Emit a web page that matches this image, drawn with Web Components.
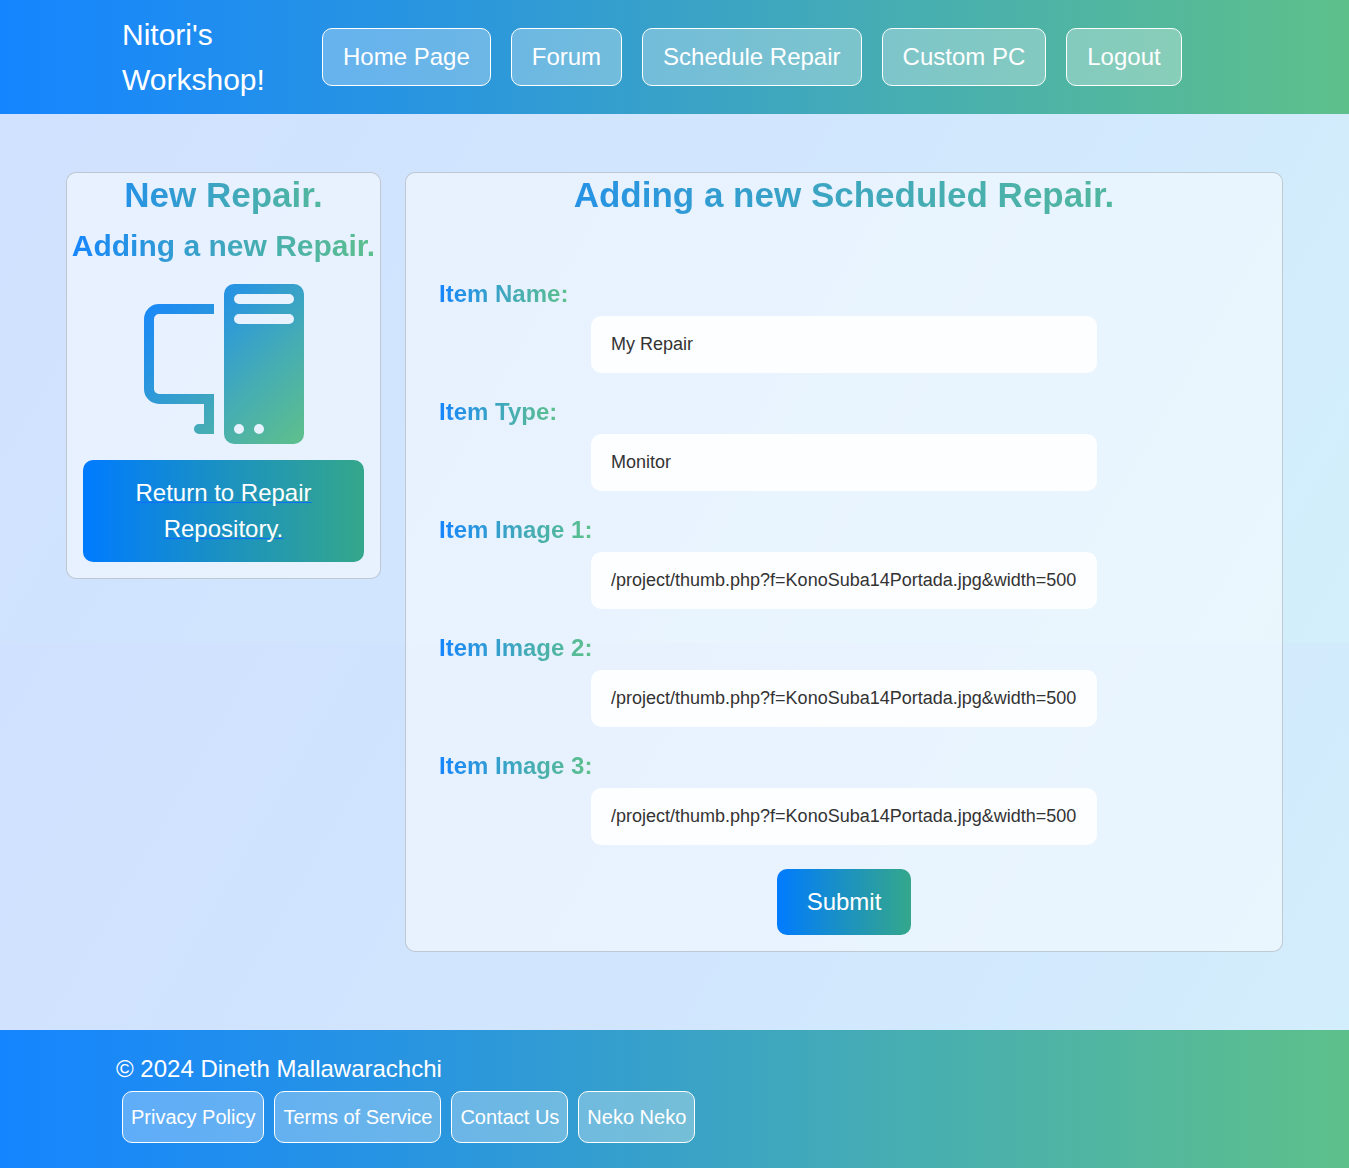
<!DOCTYPE html>
<html lang="en">
<head>
<meta charset="utf-8">
<meta name="viewport" content="width=device-width, initial-scale=1">
<title>Nitori's Workshop - New Repair</title>
<style>
  :root {
    --bar: linear-gradient(90deg, #1585ff, #2a96de 33%, #46adb3 66%, #5dc08b);
    --ink: linear-gradient(90deg, #1585ff, #2a96de 25%, #46adb3 60%, #5dc08b);
    --action: linear-gradient(90deg, #007bff, #168dcd 40%, #34a78b);
    --radius: 10px;
  }
  body {
    margin: 0;
    min-height: 100vh;
    font: 24px/36px "Liberation Sans", Arial, sans-serif;
    color: #333;
    background: linear-gradient(120deg, #d0e1ff, #d1e6fe 50%, #d3effb) 0 0 / 100% 643px repeat;
  }
</style>
</head>
<body>
<workshop-page></workshop-page>

<script>
class BaseElement extends HTMLElement {
  connectedCallback() {
    if (this.shadowRoot) return;
    this.attachShadow({ mode: "open" }).innerHTML =
      `<style>*{box-sizing:border-box}:host{display:block}</style>${this.render()}`;
  }
}

class PillLink extends BaseElement {
  render() {
    return `<style>
      :host { flex: none; }
      a { display: block; padding: 10px 20px; border: 1px solid #fff; border-radius: var(--radius);
          background: rgba(255,255,255,.3); color: #fff; text-decoration: none; white-space: nowrap; }
      :host([small]) a { padding: 10px 8px; font-size: 20px; line-height: 30px; }
    </style><a href="#"><slot></slot></a>`;
  }
}

class SiteHeader extends BaseElement {
  render() {
    return `<style>
      header { padding: 12px 24px; background: var(--bar); }
      .inner { display: flex; align-items: center; max-width: 1105px; margin: 0 auto; }
      .brand { flex: none; width: 160px; margin-right: 40px; font-size: 30px; line-height: 45px; color: #fff; text-decoration: none; }
      nav { display: flex; flex-wrap: wrap; gap: 20px; }
    </style>
    <header><div class="inner">
      <a class="brand" href="#">Nitori's Workshop!</a>
      <nav>
        <pill-link>Home Page</pill-link><pill-link>Forum</pill-link><pill-link>Schedule Repair</pill-link><pill-link>Custom PC</pill-link><pill-link>Logout</pill-link>
      </nav>
    </div></header>`;
  }
}

class SiteFooter extends BaseElement {
  render() {
    return `<style>
      footer { padding: 21px 24px 25px; background: var(--bar); color: #fff; }
      .inner { max-width: 1117px; margin: 0 auto; }
      p { margin: 0 0 4px; }
      nav { display: flex; flex-wrap: wrap; gap: 10px; padding: 0 6px; }
    </style>
    <footer><div class="inner">
      <p>© 2024 Dineth Mallawarachchi</p>
      <nav>
        <pill-link small>Privacy Policy</pill-link><pill-link small>Terms of Service</pill-link><pill-link small>Contact Us</pill-link><pill-link small>Neko Neko</pill-link>
      </nav>
    </div></footer>`;
  }
}

class GlassCard extends BaseElement {
  render() {
    return `<style>
      :host { border: 1px solid rgba(0,0,0,.175); border-radius: var(--radius);
              background: rgba(255,255,255,.5); box-sizing: border-box; }
      h1 { margin: 0; font-size: 35px; line-height: 43px; text-align: center;
           background: var(--ink); background-clip: text; -webkit-background-clip: text; color: transparent; }
    </style>
    <h1>${this.getAttribute("heading")}</h1><slot></slot>`;
  }
}

class PcIcon extends BaseElement {
  render() {
    return `<style>svg { display: block; width: 160px; height: 160px; margin: 0 auto; }</style>
    <svg viewBox="0 0 16 16" aria-hidden="true">
      <defs><linearGradient id="g" x1="0" y1="0" x2="1" y2="1">
        <stop offset="0" stop-color="#1585ff"/><stop offset=".33" stop-color="#2a96de"/><stop offset=".66" stop-color="#46adb3"/><stop offset="1" stop-color="#5fc08b"/>
      </linearGradient></defs>
      <path fill="url(#g)" d="M8 1a1 1 0 0 1 1-1h6a1 1 0 0 1 1 1v14a1 1 0 0 1-1 1H9a1 1 0 0 1-1-1zm1 13.5a.5.5 0 1 0 1 0 .5.5 0 0 0-1 0m2 0a.5.5 0 1 0 1 0 .5.5 0 0 0-1 0M9.5 1a.5.5 0 0 0 0 1h5a.5.5 0 0 0 0-1zM9 3.5a.5.5 0 0 0 .5.5h5a.5.5 0 0 0 0-1h-5a.5.5 0 0 0-.5.5M1.5 2A1.5 1.5 0 0 0 0 3.5v7A1.5 1.5 0 0 0 1.5 12H6v2h-.5a.5.5 0 0 0 0 1H7v-4H1.5a.5.5 0 0 1-.5-.5v-7a.5.5 0 0 1 .5-.5H7V2z"/>
    </svg>`;
  }
}

class RepairSummary extends BaseElement {
  render() {
    return `<style>
      h2 { margin: 12px 0 20px; font-size: 30px; line-height: 36px; text-align: center;
           background: var(--ink); background-clip: text; -webkit-background-clip: text; color: transparent; }
      a { display: block; margin: 16px; padding: 15px 30px; border-radius: var(--radius);
          background: var(--action); text-align: center; color: #0d6efd; text-decoration-thickness: 1px; }
      span { color: #fff; }
    </style>
    <glass-card heading="New Repair.">
      <h2>Adding a new Repair.</h2>
      <pc-icon></pc-icon>
      <a href="#"><span>Return to Repair Repository.</span></a>
    </glass-card>`;
  }
}

class FormField extends BaseElement {
  render() {
    return `<style>
      :host { display: flex; flex-direction: column; gap: 4px; }
      label { align-self: flex-start; font-weight: bold;
              background: var(--ink); background-clip: text; -webkit-background-clip: text; color: transparent; }
      input { align-self: center; width: 506px; max-width: 100%; height: 57px; margin: 0; padding: 15px 20px;
              border: 0; border-radius: var(--radius); background: rgba(255,255,255,.9);
              font: 18px/27px "Liberation Sans", Arial, sans-serif; color: #333; }
    </style>
    <label for="field">${this.getAttribute("label")}</label>
    <input id="field" type="text">`;
  }
  connectedCallback() {
    super.connectedCallback();
    this.shadowRoot.querySelector("input").value = this.getAttribute("value");
  }
}

class RepairForm extends BaseElement {
  render() {
    const image = "/project/thumb.php?f=KonoSuba14Portada.jpg&amp;width=500";
    return `<style>
      form { display: flex; flex-direction: column; gap: 21px; padding: 60px 33px 16px; }
      button { align-self: center; margin: 3px 0 0; padding: 15px 30px; border: 0; border-radius: var(--radius);
               background: var(--action); color: #fff; font: inherit; }
    </style>
    <glass-card heading="Adding a new Scheduled Repair.">
      <form onsubmit="return false">
        <form-field label="Item Name:" value="My Repair"></form-field>
        <form-field label="Item Type:" value="Monitor"></form-field>
        <form-field label="Item Image 1:" value="${image}"></form-field>
        <form-field label="Item Image 2:" value="${image}"></form-field>
        <form-field label="Item Image 3:" value="${image}"></form-field>
        <button type="submit">Submit</button>
      </form>
    </glass-card>`;
  }
}

class WorkshopPage extends BaseElement {
  render() {
    return `<style>
      main { display: flex; align-items: flex-start; gap: 24px; max-width: 1265px; margin: 0 auto; padding: 58px 24px 78px; }
      repair-summary { flex: 0 0 315px; }
      repair-form { flex: 1; min-width: 0; }
    </style>
    <site-header></site-header>
    <main><repair-summary></repair-summary><repair-form></repair-form></main>
    <site-footer></site-footer>`;
  }
}

customElements.define("pill-link", PillLink);
customElements.define("site-header", SiteHeader);
customElements.define("site-footer", SiteFooter);
customElements.define("glass-card", GlassCard);
customElements.define("pc-icon", PcIcon);
customElements.define("repair-summary", RepairSummary);
customElements.define("form-field", FormField);
customElements.define("repair-form", RepairForm);
customElements.define("workshop-page", WorkshopPage);
</script>
</body>
</html>
